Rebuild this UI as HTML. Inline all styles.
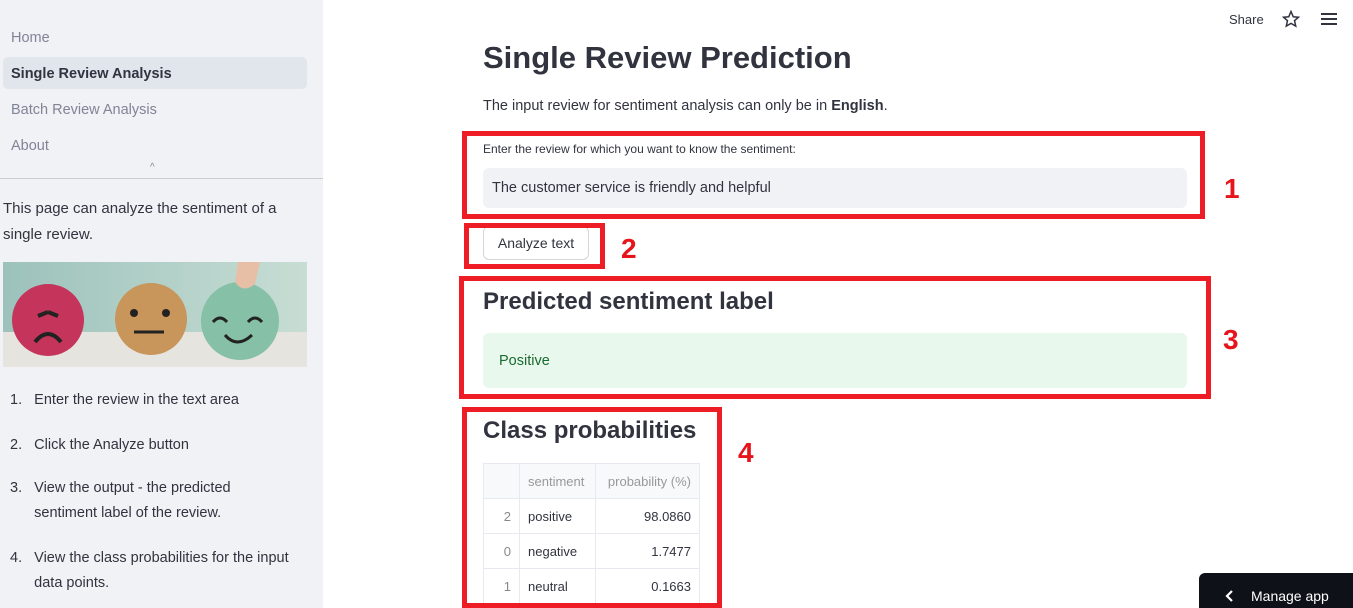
<!DOCTYPE html>
<html><head><meta charset="utf-8"><style>
*{box-sizing:border-box;margin:0;padding:0}
body{width:1353px;height:608px;overflow:hidden;background:#fff;font-family:"Liberation Sans",sans-serif;color:#31333f;position:relative}
.sb{position:absolute;left:0;top:0;width:323px;height:608px;background:#f0f2f6}
.nav{position:absolute;left:11px;font-size:14.5px;color:#808495}
.sel{position:absolute;left:3px;top:57px;width:304px;height:32px;background:#e1e5ec;border-radius:5px}
.abs{position:absolute}
.rb{position:absolute;border:5px solid #ee1c25}
.num{position:absolute;color:#e8141c;font-weight:bold;font-size:28px}
table{border-collapse:collapse;font-size:13px}
td{border:1px solid #e6e9ef;height:35px;padding:0 8px}
</style></head><body>
<div class="sb">
<div class="sel"></div>
<div class="nav" style="top:30px">Home</div>
<div class="nav" style="top:66px;color:#31333f;font-weight:bold">Single Review Analysis</div>
<div class="nav" style="top:102px">Batch Review Analysis</div>
<div class="nav" style="top:138px">About</div>
<div class="abs" style="left:150px;top:162px;font-size:10px;color:#888">^</div>
<div class="abs" style="left:0;top:178px;width:323px;height:1px;background:#ccc"></div>
<div class="abs" style="left:3px;top:196px;width:300px;font-size:15px;line-height:26px">This page can analyze the sentiment of a single review.</div>
<svg class="abs" style="left:3px;top:262px" width="304" height="105">
<defs><linearGradient id="g" x1="0" x2="1"><stop offset="0" stop-color="#9cc2bb"/><stop offset="1" stop-color="#c7ddd4"/></linearGradient></defs>
<rect width="304" height="70" fill="url(#g)"/><rect y="70" width="304" height="35" fill="#e6e4df"/>
<circle cx="45" cy="58" r="36" fill="#c5345a"/><circle cx="148" cy="57" r="36" fill="#c8955a"/><circle cx="237" cy="59" r="39" fill="#86c0a6"/>
<path d="M235 0 L232 20 Q240 32 252 22 L257 0Z" fill="#e7bfa6"/>
<path d="M35 54 l10-4 M55 54 l-10-4" stroke="#222" stroke-width="4"/><path d="M32 80 Q45 64 58 80" stroke="#222" stroke-width="4" fill="none"/>
<circle cx="131" cy="51" r="4" fill="#222"/><circle cx="163" cy="51" r="4" fill="#222"/><path d="M131 70h30" stroke="#222" stroke-width="3"/>
<path d="M210 60q7-8 14 0M245 60q7-8 14 0M222 73q12 14 27 0" stroke="#222" stroke-width="3" fill="none"/>
</svg>
<div class="abs" style="left:10px;top:388px;font-size:14.5px;line-height:25px">
<div style="position:absolute;top:0;width:300px">1.&nbsp;&nbsp;&nbsp;Enter the review in the text area</div>
<div style="position:absolute;top:45px;width:300px">2.&nbsp;&nbsp;&nbsp;Click the Analyze button</div>
<div style="position:absolute;top:88px;width:300px">3.&nbsp;&nbsp;&nbsp;View the output - the predicted<br>&nbsp;&nbsp;&nbsp;&nbsp;&nbsp;&nbsp;sentiment label of the review.</div>
<div style="position:absolute;top:158px;width:300px">4.&nbsp;&nbsp;&nbsp;View the class probabilities for the input<br>&nbsp;&nbsp;&nbsp;&nbsp;&nbsp;&nbsp;data points.</div>
</div>
</div>
<div class="abs" style="left:1229px;top:12px;font-size:13px">Share</div>
<svg class="abs" style="left:1282px;top:10px" width="18" height="18" viewBox="0 0 24 24"><path d="M12 2l3 7 7 .6-5.3 4.6 1.6 7.3L12 17.8 5.7 21.5l1.6-7.3L2 9.6 9 9z" fill="none" stroke="#31333f" stroke-width="2"/></svg>
<svg class="abs" style="left:1321px;top:12px" width="16" height="14"><path d="M0 2h16M0 7h16M0 12h16" stroke="#31333f" stroke-width="2"/></svg>
<div class="abs" style="left:483px;top:40px;font-size:31px;font-weight:bold">Single Review Prediction</div>
<div class="abs" style="left:483px;top:98px;font-size:14.5px">The input review for sentiment analysis can only be in <b>English</b>.</div>
<div class="abs" style="left:483px;top:142px;font-size:12px">Enter the review for which you want to know the sentiment:</div>
<div class="abs" style="left:483px;top:168px;width:704px;height:40px;background:#f0f2f6;border-radius:6px;font-size:14.5px;padding:12px 9px">The customer service is friendly and helpful</div>
<div class="abs" style="left:483px;top:226px;width:106px;height:34px;border:1px solid #d6d6d9;border-radius:6px;font-size:14px;text-align:center;line-height:32px">Analyze text</div>
<div class="abs" style="left:483px;top:288px;font-size:24px;font-weight:bold">Predicted sentiment label</div>
<div class="abs" style="left:483px;top:333px;width:704px;height:55px;background:#e8f8ec;border-radius:6px;font-size:14.5px;color:#1b6a30;padding:20px 16px">Positive</div>
<div class="abs" style="left:483px;top:417px;font-size:24px;font-weight:bold">Class probabilities</div>
<table class="abs" style="left:483px;top:463px">
<tr style="background:#f8f9fb;color:#999"><td style="width:36px"></td><td style="width:76px">sentiment</td><td style="width:104px;text-align:right">probability (%)</td></tr>
<tr><td style="text-align:right;color:#888">2</td><td>positive</td><td style="text-align:right">98.0860</td></tr>
<tr><td style="text-align:right;color:#888">0</td><td>negative</td><td style="text-align:right">1.7477</td></tr>
<tr><td style="text-align:right;color:#888">1</td><td>neutral</td><td style="text-align:right">0.1663</td></tr>
</table>
<div class="rb" style="left:462px;top:131px;width:743px;height:88px"></div>
<div class="rb" style="left:464px;top:223px;width:141px;height:46px"></div>
<div class="rb" style="left:459px;top:276px;width:752px;height:123px"></div>
<div class="rb" style="left:462px;top:407px;width:260px;height:201px"></div>
<div class="num" style="left:1224px;top:173px">1</div>
<div class="num" style="left:621px;top:233px">2</div>
<div class="num" style="left:1223px;top:324px">3</div>
<div class="num" style="left:738px;top:437px">4</div>
<div class="abs" style="left:1199px;top:573px;width:154px;height:35px;background:#0e1117;border-radius:6px 0 0 0;color:#fff;font-size:14px;padding:15px 0 0 52px">Manage app</div>
<svg class="abs" style="left:1225px;top:590px" width="10" height="12"><path d="M7 1L2 6l5 5" stroke="#fff" stroke-width="2.2" fill="none"/></svg>
</body></html>
